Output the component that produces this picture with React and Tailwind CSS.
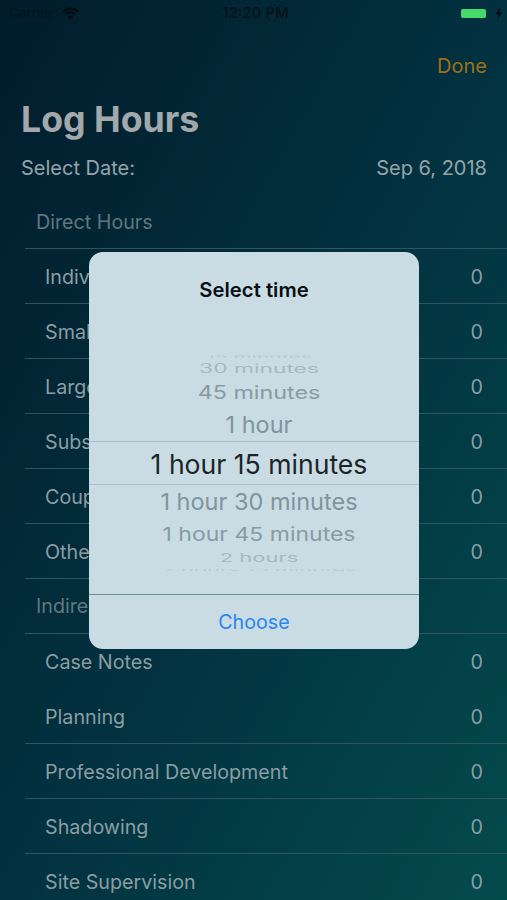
import React from 'react';

const directRows = ['Individual', 'Small Group', 'Large Group', 'Substance', 'Couples', 'Other'];
const indirectRows = ['Case Notes', 'Planning', 'Professional Development', 'Shadowing', 'Site Supervision'];

function Row({ label, last }) {
  return (
    <div className={`flex h-[55px] items-center justify-between pl-5 pr-6 pt-[3px] text-[19.7px] text-[#8b9ea3] ${last ? '' : 'border-b border-[#2f5560]'}`}>
      <span>{label}</span>
      <span>0</span>
    </div>
  );
}

function StatusBar() {
  return (
    <div className="flex h-[27px] items-center justify-between pl-[9px] pr-[5px] text-[15px] text-[#051018]">
      <div className="flex w-[100px] items-center gap-[9px]">
        <span className="text-[13.5px] opacity-60">Carrier</span>
        <svg width="17" height="13" viewBox="0 0 17 13" fill="none" stroke="#04090d" strokeWidth="2">
          <path d="M1 4.4C3 2.5 5.6 1.4 8.5 1.4s5.500 1.100 7.500 3" />
          <path d="M3.700 7.200C5 6 6.700 5.300 8.500 5.300s3.500 .7 4.800 1.900" />
          <path d="M8.500 12.500 5.800 9.700C6.500 9.100 7.500 8.800 8.500 8.800s2 .3 2.700 .9z" fill="#04090d" stroke="none" />
        </svg>
      </div>
      <span className="font-medium">12:20 PM</span>
      <div className="flex w-[100px] items-center justify-end gap-[10px]">
        <div className="h-[9px] w-[25px] rounded-[2px] bg-[#45d96b]" />
        <svg width="6" height="11" viewBox="0 0 6 11" fill="#04090d">
          <path d="M4 0 0 6h2.200L1.600 11 6 4.500H3.600z" />
        </svg>
      </div>
    </div>
  );
}

function TimeDialog() {
  return (
    <div className="absolute left-[89px] top-[252px] flex h-[397px] w-[330px] flex-col rounded-[14px] bg-[#c9dce4] font-['Inter',sans-serif]">
      <div className="flex h-[74px] items-center justify-center pt-[3px] text-[20.300px] font-semibold text-[#0a0f12]">Select time</div>
      {/* wheel items get squashed towards the edges, and the wheel sits a bit right of centre */}
      <div className="flex h-[269px] flex-col items-center border-b border-[#6d8d9c]">
        <div className="ml-[10px] mt-[28px] h-[5px] scale-y-[0.4] overflow-hidden whitespace-nowrap text-[21px] leading-[5px] text-[#b4c6cc]">15 minutes</div>
        <div className="ml-[10px] h-[20px] scale-y-[0.55] whitespace-nowrap text-[22.800px] leading-[20px] text-[#a6b9c0]">30 minutes</div>
        <div className="ml-[10px] h-[28px] scale-y-[0.78] whitespace-nowrap text-[23.300px] leading-[28px] text-[#879ba3]">45 minutes</div>
        <div className="ml-[10px] h-[34px] whitespace-nowrap pt-[2px] text-[23.500px] leading-[32px] text-[#7f949c]">1 hour</div>
        <div className="flex h-[44px] w-full shrink-0 items-center justify-center border-y border-[#a9c0ca] pl-[10px] pt-[3px] text-[26.600px] text-[#1c2428]">1 hour 15 minutes</div>
        <div className="ml-[10px] h-[32px] whitespace-nowrap pt-[1px] text-[23.500px] leading-[32px] text-[#7f949c]">1 hour 30 minutes</div>
        <div className="ml-[10px] h-[34px] scale-y-[0.82] whitespace-nowrap text-[23px] leading-[34px] text-[#879ba3]">1 hour 45 minutes</div>
        <div className="ml-[10px] h-[12px] scale-y-[0.55] whitespace-nowrap text-[22px] leading-[14px] text-[#a6b9c0]">2 hours</div>
        <div className="ml-[10px] mt-[5px] h-[4px] scale-y-[0.4] overflow-hidden whitespace-nowrap text-[22px] leading-[4px] text-[#b4c6cc]">2 hours 15 minutes</div>
      </div>
      <div className="flex flex-1 items-center justify-center pt-[2px] text-[19.700px] text-[#2a86ea]">Choose</div>
    </div>
  );
}

export default function App() {
  return (
    <div className="relative h-[900px] w-[507px] overflow-hidden bg-gradient-to-br from-[#021c2b] via-[#02313f] to-[#044b4d] font-['Inter',sans-serif]">
      <StatusBar />
      <div className="flex h-[78px] justify-end pr-5 pt-6 text-[20px] text-[#9c701b]">Done</div>
      <div className="px-[21px] text-[35.700px] font-bold leading-[28px] text-[#a3a8ab]">Log Hours</div>
      <div className="mt-5 flex items-center justify-between pl-[21px] pr-5 text-[20px] text-[#96a5ab]">
        <span>Select Date:</span>
        <span>Sep 6, 2018</span>
      </div>
      <div className="ml-[25px] mt-[13px]">
        <div className="flex h-[53px] items-center border-b border-[#2f5560] pl-[11px] pt-[2px] text-[19.700px] text-[#5f7880]">Direct Hours</div>
        {directRows.map((label) => (
          <Row key={label} label={label} />
        ))}
        <div className="flex h-[55px] items-center border-b border-[#2f5560] pl-[11px] pt-[2px] text-[19.700px] text-[#5f7880]">Indirect Hours</div>
        {indirectRows.map((label, i) => (
          <Row key={label} label={label} last={i === 0 || i === indirectRows.length - 1} />
        ))}
      </div>
      <TimeDialog />
    </div>
  );
}
